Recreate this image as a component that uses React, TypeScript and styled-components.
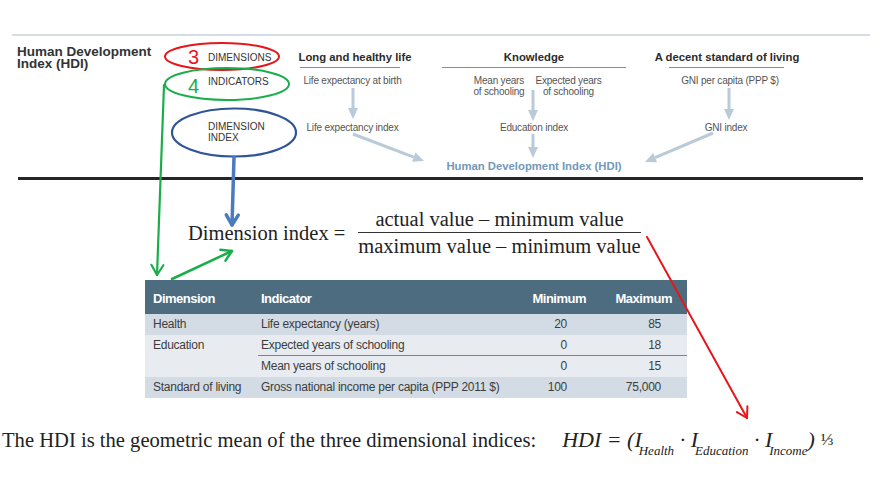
import React from "react";
import styled, { createGlobalStyle } from "styled-components";

const GlobalStyle = createGlobalStyle`
  html, body { margin: 0; padding: 0; background: #fff; }
  body { font-family: "Liberation Sans", Arial, sans-serif; }
`;

const Page = styled.div`
  position: relative;
  width: 880px;
  height: 478px;
  overflow: hidden;
  background: #fff;
`;

/* ---------- top diagram ---------- */

const TopPanel = styled.section`
  position: relative;
  margin: 34px 10px 0 12px;
  border-top: 2px solid #d4dde6;
  padding-left: 5px;
  height: 141px;
`;

const DiagramGrid = styled.div`
  display: grid;
  grid-template-columns: 171px 110px 114px 30px 184px 28px 146px;
  grid-template-rows: 31px 1px 32px 34px 43px;
`;

const Title = styled.div`
  grid-column: 1;
  grid-row: 1 / span 4;
  padding-top: 10px;
  font-size: 13.5px;
  font-weight: 700;
  line-height: 12px;
  color: #333;
`;

const Label = styled.div<{ $row: number; $pad: number }>`
  grid-column: 2;
  grid-row: ${(p) => p.$row};
  display: flex;
  align-items: flex-start;
  padding-top: ${(p) => p.$pad}px;
  font-size: 10px;
  line-height: 11px;
  color: #333;
`;

const Digit = styled.span<{ $color: string; $offset: number }>`
  width: 20px;
  flex: none;
  margin-top: ${(p) => p.$offset}px;
  font-size: 20px;
  line-height: 20px;
  color: ${(p) => p.$color};
`;

const Heading = styled.div<{ $col: number }>`
  grid-column: ${(p) => p.$col};
  grid-row: 1;
  padding-top: 15px;
  text-align: center;
  white-space: nowrap;
  font-size: 11.3px;
  font-weight: 700;
  line-height: 13px;
  color: #2b2b2b;
`;

const Underline = styled.div<{ $col: number; $inset: number; $width: number }>`
  grid-column: ${(p) => p.$col};
  grid-row: 2;
  margin-left: ${(p) => p.$inset}px;
  width: ${(p) => p.$width}px;
  height: 1px;
  background: #8c8c8c;
`;

const Indicators = styled.div<{ $col: number; $shift?: number }>`
  grid-column: ${(p) => p.$col};
  grid-row: 3;
  display: flex;
  justify-content: center;
  gap: 11px;
  padding-top: 7px;
  padding-left: ${(p) => Math.max(0, p.$shift ?? 0)}px;
  padding-right: ${(p) => Math.max(0, -(p.$shift ?? 0))}px;
  font-size: 10px;
  line-height: 11px;
  letter-spacing: -0.2px;
  text-align: center;
  white-space: nowrap;
  color: #555;
`;

const IndexName = styled(Indicators)`
  grid-row: 4;
  padding-top: 22px;
`;

const HdiLabel = styled.div`
  grid-column: 5;
  grid-row: 5;
  padding-top: 26px;
  text-align: center;
  white-space: nowrap;
  font-size: 11.3px;
  font-weight: 700;
  line-height: 13px;
  color: #7398b9;
`;

const FlowArrows = styled.svg`
  position: absolute;
  top: 0;
  left: 0;
  pointer-events: none;
`;

const HeavyRule = styled.div`
  margin-left: 18px;
  width: 845px;
  height: 3px;
  background: #262626;
`;

/* ---------- dimension index formula ---------- */

const FormulaRow = styled.div`
  display: flex;
  align-items: center;
  margin: 28px 0 0 188px;
  font-family: "Liberation Serif", "Times New Roman", serif;
  font-size: 20.5px;
  line-height: 22px;
  color: #222;
`;

const Lhs = styled.span`
  margin-right: 13px;
  white-space: nowrap;
`;

const Fraction = styled.span`
  display: inline-flex;
  flex-direction: column;
  align-items: center;
  white-space: nowrap;
`;

const FractionBar = styled.span`
  align-self: stretch;
  height: 1px;
  margin: 2px 0;
  background: #333;
`;

/* ---------- goalposts table ---------- */

const Table = styled.div`
  margin: 23px 0 0 145px;
  width: 542px;
  color: #3d3d3d;
`;

const columns = "113px 252px 82px 95px";

const HeadRow = styled.div`
  display: grid;
  grid-template-columns: ${columns};
  align-items: center;
  height: 34px;
  padding-top: 2px;
  box-sizing: border-box;
  background: #4d6c80;
  color: #fff;
  font-size: 13px;
  font-weight: 700;
  letter-spacing: -0.5px;
  line-height: 15px;
`;

const BodyRow = styled.div<{ $shade: boolean }>`
  display: grid;
  grid-template-columns: ${columns};
  height: 21px;
  background: ${(p) => (p.$shade ? "#d3dce4" : "#e8ecf0")};
  font-size: 12px;
  letter-spacing: -0.25px;
  line-height: 21px;
`;

const Cell = styled.div<{ $right?: number; $left?: number; $ruled?: boolean }>`
  white-space: nowrap;
  text-align: ${(p) => (p.$right !== undefined ? "right" : "left")};
  padding-left: ${(p) => p.$left ?? 0}px;
  padding-right: ${(p) => p.$right ?? 0}px;
  box-shadow: ${(p) => (p.$ruled ? "inset 0 -1px 0 #6f889b" : "none")};
`;

/* ---------- HDI summary ---------- */

const Summary = styled.div`
  display: flex;
  align-items: baseline;
  margin-top: 30px;
  padding-left: 2px;
  font-family: "Liberation Serif", "Times New Roman", serif;
  color: #222;
`;

const Sentence = styled.span`
  font-size: 20.6px;
  line-height: 24px;
  white-space: nowrap;
`;

const HdiFormula = styled.span`
  margin-left: 26px;
  font-size: 22px;
  font-style: italic;
  line-height: 24px;
  white-space: nowrap;
`;

const Sub = styled.span`
  position: relative;
  top: 8px;
  margin-left: -3px;
  font-size: 13px;
`;

const Third = styled.span`
  margin-left: 6px;
  font-style: normal;
  font-size: 17px;
  position: relative;
  top: -2px;
`;

/* ---------- annotation layer ---------- */

const Annotations = styled.svg`
  position: absolute;
  top: 0;
  left: 0;
  pointer-events: none;
`;

type Pt = [number, number];

function headPolygon(from: Pt, to: Pt, len: number, half: number) {
  const [x1, y1] = from;
  const [x2, y2] = to;
  const d = Math.hypot(x2 - x1, y2 - y1);
  const ux = (x2 - x1) / d;
  const uy = (y2 - y1) / d;
  const bx = x2 - ux * len;
  const by = y2 - uy * len;
  const l: Pt = [bx - uy * half, by + ux * half];
  const r: Pt = [bx + uy * half, by - ux * half];
  return { base: [bx, by] as Pt, l, r };
}

function FlowArrow({ from, to }: { from: Pt; to: Pt }) {
  const { base, l, r } = headPolygon(from, to, 11, 5);
  return (
    <g>
      <line x1={from[0]} y1={from[1]} x2={base[0]} y2={base[1]} stroke="#b9cad8" strokeWidth={3} />
      <polygon points={`${to[0]},${to[1]} ${l[0]},${l[1]} ${r[0]},${r[1]}`} fill="#b9cad8" />
    </g>
  );
}

function PenArrow({ from, to, color, width }: { from: Pt; to: Pt; color: string; width: number }) {
  const { l, r } = headPolygon(from, to, 10, 6);
  return (
    <g stroke={color} strokeWidth={width} fill="none" strokeLinecap="round" strokeLinejoin="round">
      <line x1={from[0]} y1={from[1]} x2={to[0]} y2={to[1]} />
      <polyline points={`${l[0]},${l[1]} ${to[0]},${to[1]} ${r[0]},${r[1]}`} />
    </g>
  );
}

const rows = [
  { dim: "Health", ind: "Life expectancy (years)", min: "20", max: "85", shade: true },
  { dim: "Education", ind: "Expected years of schooling", min: "0", max: "18", shade: false, ruled: true },
  { dim: "", ind: "Mean years of schooling", min: "0", max: "15", shade: false },
  { dim: "Standard of living", ind: "Gross national income per capita (PPP 2011 $)", min: "100", max: "75,000", shade: true },
];

export default function App() {
  return (
    <Page>
      <GlobalStyle />

      <TopPanel>
        <DiagramGrid>
          <Title>
            Human Development
            <br />
            Index (HDI)
          </Title>

          <Label $row={1} $pad={16}>
            <Digit $color="#e8161b" $offset={-5}>3</Digit>
            DIMENSIONS
          </Label>
          <Label $row={3} $pad={8}>
            <Digit $color="#1aae4a" $offset={0}>4</Digit>
            INDICATORS
          </Label>
          <Label $row={4} $pad={21}>
            <Digit $color="transparent" $offset={0} />
            <span>
              DIMENSION
              <br />
              INDEX
            </span>
          </Label>

          <Heading $col={3}>Long and healthy life</Heading>
          <Heading $col={5}>Knowledge</Heading>
          <Heading $col={7}>A decent standard of living</Heading>

          <Underline $col={3} $inset={2} $width={100} />
          <Underline $col={5} $inset={0} $width={184} />
          <Underline $col={7} $inset={15} $width={115} />

          <Indicators $col={3} $shift={-5}>Life expectancy at birth</Indicators>
          <Indicators $col={5} $shift={7}>
            <span>
              Mean years
              <br />
              of schooling
            </span>
            <span>
              Expected years
              <br />
              of schooling
            </span>
          </Indicators>
          <Indicators $col={7} $shift={6}>GNI per capita (PPP $)</Indicators>

          <IndexName $col={3} $shift={-5}>Life expectancy index</IndexName>
          <IndexName $col={5}>Education index</IndexName>
          <IndexName $col={7} $shift={-2}>GNI index</IndexName>

          <HdiLabel>Human Development Index (HDI)</HdiLabel>
        </DiagramGrid>

        <FlowArrows width={858} height={141} viewBox="12 36 858 141">
          <FlowArrow from={[353, 88]} to={[353, 119]} />
          <FlowArrow from={[533, 90]} to={[533, 121]} />
          <FlowArrow from={[729, 88]} to={[729, 120]} />
          <FlowArrow from={[533, 134]} to={[533, 158]} />
          <FlowArrow from={[353, 134]} to={[424, 161]} />
          <FlowArrow from={[713, 133]} to={[645, 162]} />
        </FlowArrows>
      </TopPanel>

      <HeavyRule />

      <FormulaRow>
        <Lhs>Dimension index =</Lhs>
        <Fraction>
          <span>actual value – minimum value</span>
          <FractionBar />
          <span>maximum value – minimum value</span>
        </Fraction>
      </FormulaRow>

      <Table>
        <HeadRow>
          <Cell $left={8}>Dimension</Cell>
          <Cell $left={3}>Indicator</Cell>
          <Cell $right={6}>Minimum</Cell>
          <Cell $right={15}>Maximum</Cell>
        </HeadRow>
        {rows.map((r) => (
          <BodyRow key={r.ind} $shade={r.shade}>
            <Cell $left={8}>{r.dim}</Cell>
            <Cell $left={3} $ruled={r.ruled}>{r.ind}</Cell>
            <Cell $right={25} $ruled={r.ruled}>{r.min}</Cell>
            <Cell $right={26} $ruled={r.ruled}>{r.max}</Cell>
          </BodyRow>
        ))}
      </Table>

      <Summary>
        <Sentence>The HDI is the geometric mean of the three dimensional indices:</Sentence>
        <HdiFormula>
          HDI = (I<Sub>Health</Sub> · I<Sub>Education</Sub> · I<Sub>Income</Sub>)
          <Third>⅓</Third>
        </HdiFormula>
      </Summary>

      <Annotations width={880} height={478} viewBox="0 0 880 478">
        <ellipse cx={222} cy={56.5} rx={57} ry={13.5} fill="none" stroke="#e8161b" strokeWidth={2} />
        <ellipse cx={227} cy={84} rx={62} ry={16} fill="none" stroke="#1aae4a" strokeWidth={2} />
        <ellipse cx={234} cy={132.5} rx={62} ry={24} fill="none" stroke="#2f5597" strokeWidth={2.2} />
        <PenArrow from={[234, 157]} to={[232, 225]} color="#4a7bbf" width={3.5} />
        <PenArrow from={[164, 85]} to={[157, 275]} color="#1aae4a" width={2.2} />
        <PenArrow from={[172, 279]} to={[232, 251]} color="#1aae4a" width={2.5} />
        <PenArrow from={[647, 237]} to={[747, 418]} color="#e8161b" width={2} />
      </Annotations>
    </Page>
  );
}
